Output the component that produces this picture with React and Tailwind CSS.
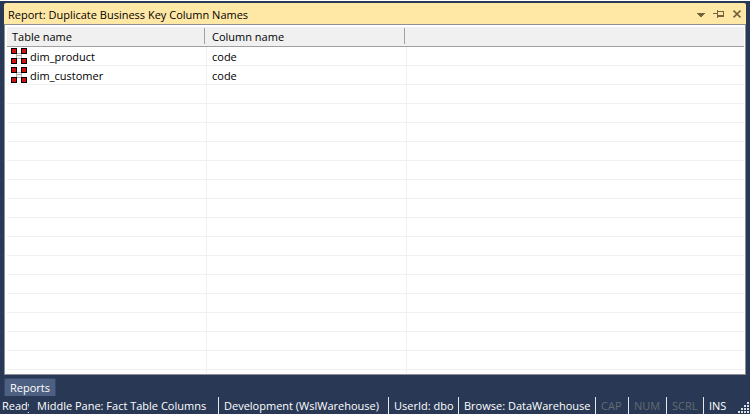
const ROW_COUNT = 17;

const records = [
  { table: "dim_product", column: "code" },
  { table: "dim_customer", column: "code" },
];

const rows = Array.from({ length: ROW_COUNT }, (_, i) => records[i] ?? null);

function DimensionIcon() {
  return (
    <svg width="16" height="16" viewBox="0 0 16 16" shapeRendering="crispEdges" aria-hidden="true" className="shrink-0">
      <path d="M5 5h1v6h-1zM10 5h1v6h-1zM6 5h4v1h-4zM6 10h4v1h-4zM5 7h6v1h-6z" fill="#b0b0b0" />
      {[0, 10].map((x) =>
        [0, 10].map((y) => (
          <g key={`${x}-${y}`}>
            <rect x={x} y={y} width="6" height="6" fill="#000000" />
            <rect x={x + 1} y={y + 1} width="4" height="4" fill="#cc1212" />
          </g>
        ))
      )}
    </svg>
  );
}

function TitleBar() {
  return (
    <header className="flex h-[21px] items-center justify-between rounded-t-xs bg-[#ffe8a6] pr-[5px] pl-1">
      <h1 className="pt-[2px] whitespace-nowrap">Report: Duplicate Business Key Column Names</h1>
      <div className="flex items-center gap-2">
        <button type="button" aria-label="Window position" className="h-3 w-2">
          <svg width="8" height="12" viewBox="0 0 8 12" shapeRendering="crispEdges">
            <path d="M0 5h8v1h-1v1h-1v1h-1v1h-2v-1h-1v-1h-1v-1h-1z" fill="#75633d" />
          </svg>
        </button>
        <button type="button" aria-label="Auto hide" className="h-3 w-3">
          <svg width="12" height="12" viewBox="0 0 12 12" shapeRendering="crispEdges">
            <path d="M0 5h4v-3h1v1h6v6h-6v1h-1v-4h-4zM5 4v3h5v-3z" fill="#75633d" fillRule="evenodd" />
          </svg>
        </button>
        <button type="button" aria-label="Close" className="h-3 w-2">
          <svg width="8" height="12" viewBox="0 0 8 12">
            <path d="M0.5 2.5l7 7M7.5 2.5l-7 7" stroke="#75633d" strokeWidth="1.7" />
          </svg>
        </button>
      </div>
    </header>
  );
}

function HeaderCell({ children }) {
  return (
    <th scope="col" className="p-0 text-left font-normal">
      <div className="mr-[2px] mb-[2px] flex h-4 items-center border-r border-[#a0a0a0] pt-[2px] pl-[5px]">{children}</div>
    </th>
  );
}

function ReportTable() {
  return (
    <table className="w-full table-fixed border-separate border-spacing-0">
      <colgroup>
        <col className="w-[200px]" />
        <col className="w-[200px]" />
        <col />
      </colgroup>
      <thead>
        <tr className="h-5 bg-[#f0f0f0] [&>*]:border-b [&>*]:border-[#a0a0a0]">
          <HeaderCell>Table name</HeaderCell>
          <HeaderCell>Column name</HeaderCell>
          <td className="p-0" />
        </tr>
      </thead>
      <tbody>
        {rows.map((row, i) => (
          <tr key={i} className="h-[19px] [&>td]:border-b [&>td]:border-[#f0f0f0] [&>td]:p-0">
            <td className="border-r">
              {row && (
                <div className="flex h-[18px] items-center gap-[3px] pl-1">
                  <DimensionIcon />
                  <span className="pt-[2px]">{row.table}</span>
                </div>
              )}
            </td>
            <td className="border-r">
              {row && <div className="flex h-[18px] items-center pt-[2px] pl-[5px]">{row.column}</div>}
            </td>
            <td />
          </tr>
        ))}
      </tbody>
      <tfoot>
        <tr className="h-[3px]">
          <td className="border-r border-[#f0f0f0] p-0" />
          <td className="border-r border-[#f0f0f0] p-0" />
          <td className="p-0" />
        </tr>
      </tfoot>
    </table>
  );
}

function SizeGrip() {
  const dots = [[9, 0], [6, 3], [9, 3], [3, 6], [6, 6], [9, 6], [0, 9], [3, 9], [6, 9], [9, 9]];
  return (
    <svg width="11" height="11" viewBox="0 0 11 11" shapeRendering="crispEdges" aria-hidden="true" className="mr-px mb-px ml-auto shrink-0 self-end">
      {dots.map(([x, y]) => (
        <rect key={`${x}-${y}`} x={x} y={y} width="2" height="2" fill="#dfe2e8" />
      ))}
    </svg>
  );
}

function StatusBar() {
  return (
    <footer className="mt-px flex h-[17px] items-center text-white">
      <span className="ml-[2px] w-[27px] shrink-0 overflow-hidden">Ready</span>
      <div className="flex shrink-0 items-center whitespace-nowrap [&>span]:flex [&>span]:h-[17px] [&>span]:items-center [&>span+span]:border-l [&>span+span]:border-[#e8e8e8]">
        <span className="w-[189px] pl-2">Middle Pane: Fact Table Columns</span>
        <span className="w-[170px] pl-[5px]">Development (WslWarehouse)</span>
        <span className="w-[70px] pl-[5px]">UserId: dbo</span>
        <span className="w-[137px] pl-[5px]">Browse: DataWarehouse</span>
        <span className="w-[33px] pl-[5px] text-[#646a70]">CAP</span>
        <span className="w-[38px] pl-[5px] text-[#646a70]">NUM</span>
        <span className="w-[37px] pl-[5px] text-[#646a70]">SCRL</span>
        <span className="pl-[5px]">INS</span>
      </div>
      <SizeGrip />
    </footer>
  );
}

export default function App() {
  return (
    <div className="min-h-screen overflow-hidden border-t border-white bg-[#293955] pt-[2px] font-['Open_Sans',sans-serif] text-[11px] leading-4 text-black">
      <main className="mr-1 ml-1">
        <TitleBar />
        <section className="border border-[#8e8e96] bg-white pt-[2px] pr-px pb-px pl-[2px]">
          <ReportTable />
        </section>
        <nav className="mt-[3px] flex">
          <button type="button" className="h-[18px] rounded-t-xs border border-b-0 border-[#36486f] bg-[#4d6082] px-[5px] text-white">
            Reports
          </button>
        </nav>
      </main>
      <StatusBar />
    </div>
  );
}
